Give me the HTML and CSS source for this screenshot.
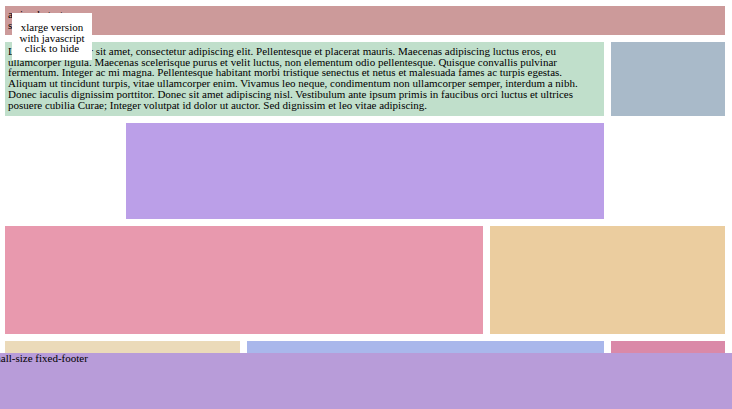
FILE: index.html
```html
<!DOCTYPE html>
<html>
<head>
<meta charset="utf-8">
<link rel="stylesheet" href="styles.css">
</head>
<body>
<div class="grid">
  <header class="cell header">a simple test<br>some header</header>
  <div class="cell main span5">Lorem ipsum dolor sit amet, consectetur adipiscing elit. Pellentesque et placerat mauris. Maecenas adipiscing luctus eros, eu ullamcorper ligula. Maecenas scelerisque purus et velit luctus, non elementum odio pellentesque. Quisque convallis pulvinar fermentum. Integer ac mi magna. Pellentesque habitant morbi tristique senectus et netus et malesuada fames ac turpis egestas. Aliquam ut tincidunt turpis, vitae ullamcorper enim. Vivamus leo neque, condimentum non ullamcorper semper, interdum a nibh. Donec iaculis dignissim porttitor. Donec sit amet adipiscing nisl. Vestibulum ante ipsum primis in faucibus orci luctus et ultrices posuere cubilia Curae; Integer volutpat id dolor ut auctor. Sed dignissim et leo vitae adipiscing.</div>
  <div class="cell side"></div>
  <div class="cell feature"></div>
  <div class="cell wide"></div>
  <div class="cell aside"></div>
  <div class="cell b1"></div>
  <div class="cell b2"></div>
  <div class="cell b3"></div>
</div>
<div class="notice">xlarge version<br>with javascript<br>click to hide</div>
<footer class="footer"><span class="footer-text">small-size fixed-footer</span></footer>
</body>
</html>
```
FILE: styles.css
```css
html, body {
  margin: 0;
  padding: 0;
  background: #fff;
}
body {
  font-family: "Liberation Serif", "Times New Roman", serif;
  font-size: 11px;
  line-height: 10.7px;
  color: #000;
}
.grid {
  display: grid;
  grid-template-columns: repeat(6, 1fr);
  column-gap: 7px;
  row-gap: 7px;
  width: 720px;
  padding: 6px 0 80px 5px;
}
.cell {
  box-sizing: border-box;
}
.header {
  grid-column: 1 / span 6;
  height: 29px;
  padding: 3px 3px;
  background: #cc9a9a;
}
.main {
  grid-column: 1 / span 5;
  height: 74px;
  padding: 4px 3px;
  background: #c0dfcb;
}
.side {
  grid-column: 6 / span 1;
  background: #a9bac9;
}
.feature {
  grid-column: 2 / span 4;
  height: 96px;
  background: #bb9fe8;
}
.wide {
  grid-column: 1 / span 4;
  height: 108px;
  background: #e899ae;
}
.aside {
  grid-column: 5 / span 2;
  background: #ebcd9f;
}
.b1 {
  grid-column: 1 / span 2;
  height: 60px;
  background: #ebdab9;
}
.b2 {
  grid-column: 3 / span 3;
  background: #a9b7eb;
}
.b3 {
  grid-column: 6 / span 1;
  background: #da89a8;
}
.notice {
  position: absolute;
  top: 13px;
  left: 12px;
  width: 80px;
  height: 47px;
  box-sizing: border-box;
  padding: 9px 0 0;
  background: #fff;
  text-align: center;
}
.footer {
  position: fixed;
  left: 0;
  right: 0;
  bottom: 0;
  height: 56px;
  background: #b89cd9;
  overflow: hidden;
}
.footer-text {
  display: block;
  margin-left: -12px;
  margin-top: 0;
  white-space: nowrap;
}
```
